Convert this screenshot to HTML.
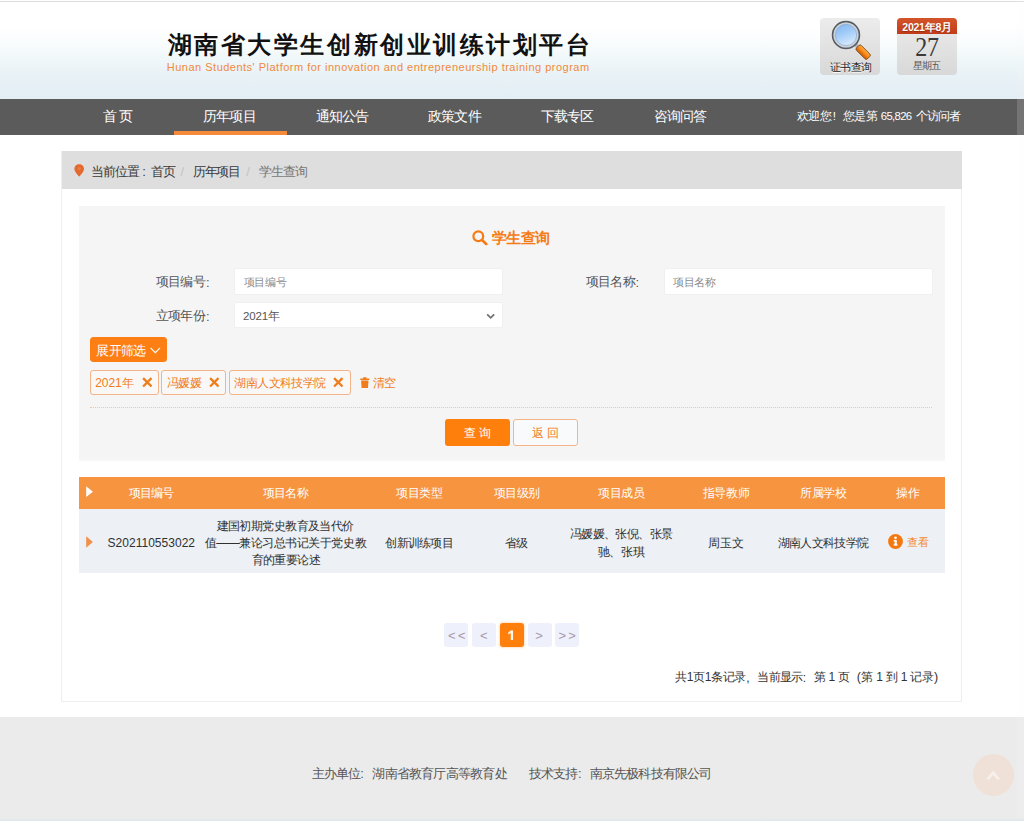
<!DOCTYPE html>
<html lang="zh">
<head>
<meta charset="utf-8">
<title>湖南省大学生创新创业训练计划平台</title>
<style>
*{box-sizing:border-box;margin:0;padding:0}
html,body{width:1024px;height:821px;overflow:hidden;background:#fff}
body{position:relative;font-family:"Liberation Sans",sans-serif;font-size:13px;color:#333}
.abs,.t{position:absolute;white-space:nowrap}
.t{font-family:"Liberation Sans",sans-serif}
#hdr{left:0;top:0;width:1024px;height:99px;background:linear-gradient(#fff 0,#fff 28%,#f9fcfd 45%,#eff7f9 60%,#e9f2f6 74%,#e5eff5 88%,#e4eef5 100%)}
#hline{left:0;top:1px;width:1024px;height:1px;background:#dcdcdc}
.ibox{top:18px;height:57px;width:60px;border-radius:4px;background:linear-gradient(#ececec,#d8d8d8)}
#nav{left:0;top:99px;width:1024px;height:36px;background:#5b5b5b}
#nav-ul{left:174px;top:131px;width:113px;height:4px;background:#f58a3a}
#box{left:61px;top:151px;width:901px;height:551px;border:1px solid #eee;background:#fff}
#bc{left:61.8px;top:151.2px;width:900px;height:38.2px;background:#dedede}
#panel{left:78.6px;top:206.3px;width:866.4px;height:254.3px;background:#f5f5f5;border-bottom:2.3px solid #f7f7f7}
.inp{height:26.5px;width:269.2px;background:#fff;border:1px solid #f0f0f0;border-radius:2px}
.tag{top:370px;height:24.6px;border:1px solid #f2b488;border-radius:3px;background:#f9f8f7}
.btn{top:418.8px;height:27.7px;width:65px;border-radius:3px}
#th{left:78.6px;top:476.6px;width:866.4px;height:32.8px;background:#f6943f}
#tr{left:78.6px;top:509.4px;width:866.4px;height:63.8px;background:#edf0f5}
.pg{top:623.4px;width:24.2px;height:23.8px;border-radius:3px;background:#eef0fc}
#ft{left:0;top:717.4px;width:1024px;height:104px;background:#ebebeb}
</style>
</head>
<body>
<div class="abs" id="hdr"></div>
<div class="abs" id="hline"></div>

<div class="abs ibox" style="left:820px"></div>
<svg class="abs" style="left:820px;top:18px" width="60" height="57" viewBox="0 0 60 57">
<defs>
<linearGradient id="lens" x1="0.3" y1="0" x2="0.7" y2="1"><stop offset="0" stop-color="#86b9f3"/><stop offset=".45" stop-color="#a6cef8"/><stop offset="1" stop-color="#dcecfc"/></linearGradient>
<linearGradient id="hand" x1="0" y1="0" x2="0" y2="1"><stop offset="0" stop-color="#ffb04a"/><stop offset=".5" stop-color="#fa8616"/><stop offset="1" stop-color="#c85a02"/></linearGradient>
</defs>
<g transform="translate(35.6,26.6) rotate(45)">
<rect x="0" y="-2" width="4" height="4" fill="#aeb3b8"/>
<rect x="3" y="-3.4" width="15.4" height="6.8" rx="1.7" fill="url(#hand)" stroke="#7d4a14" stroke-width=".9"/>
</g>
<circle cx="26" cy="17" r="13.2" fill="none" stroke="#565d65" stroke-width="2.1"/>
<circle cx="26" cy="17" r="11.7" fill="none" stroke="#ccd2d8" stroke-width="1.8"/>
<circle cx="26" cy="17" r="10.7" fill="url(#lens)" stroke="#86a7cc" stroke-width=".7"/>
</svg>
<div class="abs ibox" style="left:897px"></div>
<div class="abs" style="left:897px;top:18px;width:60px;height:16px;background:linear-gradient(#d4542a,#c23c1a);border-radius:4px 4px 0 0"></div>

<div class="abs" id="nav"></div>
<div class="abs" id="nav-ul"></div>

<div class="abs" id="box"></div>
<div class="abs" id="bc"></div>
<svg class="abs" style="left:73.7px;top:164.3px" width="10.4" height="12.6" viewBox="0 0 10 12.6"><path d="M5 0.2C2.2 0.2 0.2 2.3 0.2 4.9c0 2.7 2.3 4.4 4.1 7L5 12.5l0.7-0.6c1.8-2.6 4.1-4.3 4.1-7C9.8 2.3 7.8 0.2 5 0.2z" fill="#e4692f"/><circle cx="5" cy="4.6" r="1.6" fill="#ea7d47"/></svg>

<div class="abs" id="panel"></div>
<svg class="abs" style="left:472.2px;top:230.2px" width="15.6" height="15.4" viewBox="0 0 15.6 15.4"><circle cx="6.3" cy="6.3" r="4.9" fill="none" stroke="#f57c14" stroke-width="2.2"/><line x1="10" y1="10" x2="14.2" y2="14" stroke="#f57c14" stroke-width="2.6" stroke-linecap="round"/></svg>

<div class="abs inp" style="left:234.2px;top:268.2px"></div>
<div class="abs inp" style="left:663.5px;top:268.2px"></div>
<div class="abs inp" style="left:234.2px;top:301.6px"></div>
<svg class="abs" style="left:485.8px;top:313.3px" width="9.4" height="7" viewBox="0 0 9.4 7"><path d="M1.2 1.3L4.7 4.8L8.2 1.3" fill="none" stroke="#707070" stroke-width="1.7"/></svg>

<div class="abs" style="left:90px;top:337.3px;width:77.3px;height:25px;background:#fd7f14;border-radius:3.5px"></div>
<svg class="abs" style="left:150px;top:346.8px" width="10.6" height="7" viewBox="0 0 10.6 7"><path d="M0.6 0.8L5.3 5.6L10 0.8" fill="none" stroke="#fff" stroke-width="1.1"/></svg>

<div class="abs tag" style="left:90px;width:68.8px"></div>
<div class="abs tag" style="left:161.2px;width:64.6px"></div>
<div class="abs tag" style="left:229px;width:122px"></div>
<svg class="abs" style="left:141.6px;top:377px" width="10.6" height="10.6" viewBox="0 0 10.6 10.6"><path d="M1.1 1.1L9.5 9.5M9.5 1.1L1.1 9.5" stroke="#f07d1b" stroke-width="2.3"/></svg>
<svg class="abs" style="left:208.8px;top:377px" width="10.6" height="10.6" viewBox="0 0 10.6 10.6"><path d="M1.1 1.1L9.5 9.5M9.5 1.1L1.1 9.5" stroke="#f07d1b" stroke-width="2.3"/></svg>
<svg class="abs" style="left:333.2px;top:377px" width="10.6" height="10.6" viewBox="0 0 10.6 10.6"><path d="M1.1 1.1L9.5 9.5M9.5 1.1L1.1 9.5" stroke="#f07d1b" stroke-width="2.3"/></svg>
<svg class="abs" style="left:360.4px;top:376.8px" width="9.6" height="11.4" viewBox="0 0 9.6 11.4"><path d="M0.3 1.5h9v1.5h-9zM3.1 0.2h3.4v1.4h-3.4zM1.1 3.6h7.4l-0.5 7.6h-6.4z" fill="#f07d1b"/></svg>

<div class="abs" style="left:90px;top:406.6px;width:842px;height:0;border-top:1px dotted #f3c6a2"></div>

<div class="abs btn" style="left:445px;background:#ff7f0c"></div>
<div class="abs btn" style="left:513.2px;width:64.6px;background:#f9fafb;border:1px solid #f3b585"></div>

<div class="abs" id="th"></div>
<div class="abs" id="tr"></div>
<svg class="abs" style="left:86.3px;top:486.3px" width="7.2" height="11.4" viewBox="0 0 7.2 11.4"><path d="M0.2 0.3L6.9 5.7L0.2 11.1z" fill="#fff"/></svg>
<svg class="abs" style="left:86.3px;top:536px" width="7.2" height="12" viewBox="0 0 7.2 12"><path d="M0.2 0.3L6.9 6L0.2 11.7z" fill="#f0904a"/></svg>
<svg class="abs" style="left:888.1px;top:534px" width="15" height="15" viewBox="0 0 15 15"><circle cx="7.5" cy="7.5" r="7.4" fill="#f4780f"/><rect x="6.5" y="6.1" width="2.3" height="5.4" fill="#fff"/><rect x="5.6" y="6.1" width="2" height="1.2" fill="#fff"/><rect x="5.5" y="10.4" width="4.2" height="1.1" fill="#fff"/><circle cx="7.5" cy="3.8" r="1.35" fill="#fff"/></svg>

<div class="abs pg" style="left:444.2px"></div>
<div class="abs pg" style="left:471.8px"></div>
<div class="abs pg" style="left:499.6px;background:#ff7f0c;box-shadow:0 0 2px 1px rgba(255,170,90,.35)"></div>
<svg class="abs" style="left:507px;top:630px" width="8" height="11" viewBox="0 0 8 11"><path d="M3.8 0.5H6.05V10.1H3.8V3.1L1.3 4.4V2.5z" fill="#fff8ea"/></svg>
<div class="abs pg" style="left:527.6px"></div>
<div class="abs pg" style="left:554.8px"></div>

<div class="abs" id="ft"></div>
<div class="abs" style="left:1017px;top:0;width:7px;height:818px;background:rgba(250,250,250,.16)"></div>
<div class="abs" style="left:0;top:818px;width:1024px;height:3px;background:linear-gradient(#e9ecec,#dfe7ea)"></div>
<div class="abs" style="left:972.8px;top:754.2px;width:41px;height:42px;border-radius:50%;background:#efe1d7"></div>
<svg class="abs" style="left:985.6px;top:770.2px" width="14.4" height="11" viewBox="0 0 14.4 11"><path d="M1.6 9.4L7.2 2.6L12.8 9.4" fill="none" stroke="#f6efea" stroke-width="3"/></svg>

<span class="t" style="left:167.69px;top:27.80px;line-height:35px;font-size:23.6px;color:#111;font-weight:bold;letter-spacing:2.548px;">湖南省大学生创新创业训练计划平台</span>
<span class="t" style="left:166.84px;top:58.60px;line-height:16px;font-size:11px;color:#f08a3c;letter-spacing:0.492px;">Hunan Students' Platform for innovation and entrepreneurship training program</span>
<span class="t" style="left:829.73px;top:59.00px;line-height:16px;font-size:11px;color:#222;letter-spacing:-0.577px;text-shadow:0 1px 0 #fff">证书查询</span>
<span class="t" style="left:902.37px;top:19.20px;line-height:16px;font-size:10.5px;color:#fff;font-weight:bold;letter-spacing:-0.267px;text-shadow:0 1px 1px rgba(110,30,0,.55)">2021年8月</span>
<span class="t" style="left:915.28px;top:29.40px;line-height:36px;font-size:24px;color:#3a3a3a;font-family:'Liberation Serif',serif;letter-spacing:-0.160px;transform:scaleY(1.1);transform-origin:50% 55%">27</span>
<span class="t" style="left:912.75px;top:58.30px;line-height:15px;font-size:9.8px;color:#555;letter-spacing:-0.907px;">星期五</span>
<span class="t" style="left:102.65px;top:106.10px;line-height:21px;font-size:14px;color:#fff;letter-spacing:-0.955px;">首 页</span>
<span class="t" style="left:203.15px;top:106.10px;line-height:21px;font-size:14px;color:#fff;letter-spacing:-0.840px;">历年项目</span>
<span class="t" style="left:315.65px;top:106.10px;line-height:21px;font-size:14px;color:#fff;letter-spacing:-0.840px;">通知公告</span>
<span class="t" style="left:428.15px;top:106.10px;line-height:21px;font-size:14px;color:#fff;letter-spacing:-0.840px;">政策文件</span>
<span class="t" style="left:540.65px;top:106.10px;line-height:21px;font-size:14px;color:#fff;letter-spacing:-0.840px;">下载专区</span>
<span class="t" style="left:653.65px;top:106.10px;line-height:21px;font-size:14px;color:#fff;letter-spacing:-1.007px;">咨询问答</span>
<span class="t" style="left:797.11px;top:107.10px;line-height:17px;font-size:11.6px;color:#fff;letter-spacing:-0.644px;">欢迎您</span>
<span class="t" style="left:832.74px;top:107.30px;line-height:17px;font-size:11.6px;color:#fff;">!</span>
<span class="t" style="left:842.81px;top:107.10px;line-height:17px;font-size:11.6px;color:#fff;letter-spacing:-0.644px;">您是第</span>
<span class="t" style="left:880.83px;top:107.50px;line-height:17px;font-size:11.4px;color:#fff;letter-spacing:-0.701px;">65,826</span>
<span class="t" style="left:916.31px;top:107.10px;line-height:17px;font-size:11.6px;color:#fff;letter-spacing:-0.963px;">个访问者</span>
<span class="t" style="left:91.08px;top:162.10px;line-height:20px;font-size:13px;color:#3a3a3a;letter-spacing:-0.897px;">当前位置</span>
<span class="t" style="left:142.20px;top:162.10px;line-height:20px;font-size:13px;color:#3a3a3a;">:</span>
<span class="t" style="left:151.28px;top:162.10px;line-height:20px;font-size:13px;color:#3a3a3a;letter-spacing:-1.290px;">首页</span>
<span class="t" style="left:180.50px;top:162.10px;line-height:20px;font-size:13px;color:#c4c4c4;">/</span>
<span class="t" style="left:192.88px;top:162.10px;line-height:20px;font-size:13px;color:#3a3a3a;letter-spacing:-1.263px;">历年项目</span>
<span class="t" style="left:246.20px;top:162.10px;line-height:20px;font-size:13px;color:#c4c4c4;">/</span>
<span class="t" style="left:258.68px;top:162.10px;line-height:20px;font-size:13px;color:#777;letter-spacing:-0.863px;">学生查询</span>
<span class="t" style="left:491.62px;top:226.80px;line-height:22px;font-size:15px;color:#f57c14;font-weight:bold;letter-spacing:-0.550px;">学生查询</span>
<span class="t" style="left:155.88px;top:272.30px;line-height:20px;font-size:13px;color:#555;letter-spacing:-0.763px;">项目编号</span>
<span class="t" style="left:206.00px;top:272.90px;line-height:20px;font-size:13px;color:#555;">:</span>
<span class="t" style="left:585.88px;top:272.30px;line-height:20px;font-size:13px;color:#555;letter-spacing:-0.763px;">项目名称</span>
<span class="t" style="left:635.50px;top:272.90px;line-height:20px;font-size:13px;color:#555;">:</span>
<span class="t" style="left:155.88px;top:306.30px;line-height:20px;font-size:13px;color:#555;letter-spacing:-0.763px;">立项年份</span>
<span class="t" style="left:206.00px;top:306.90px;line-height:20px;font-size:13px;color:#555;">:</span>
<span class="t" style="left:243.52px;top:274.00px;line-height:17px;font-size:11.3px;color:#8a8a8a;letter-spacing:-0.203px;">项目编号</span>
<span class="t" style="left:673.02px;top:274.00px;line-height:17px;font-size:11.3px;color:#8a8a8a;letter-spacing:-0.503px;">项目名称</span>
<span class="t" style="left:243.11px;top:308.00px;line-height:17px;font-size:11.5px;color:#555;letter-spacing:-0.172px;">2021年</span>
<span class="t" style="left:96.27px;top:341.20px;line-height:20px;font-size:13px;color:#fff;letter-spacing:-0.763px;">展开筛选</span>
<span class="t" style="left:95.28px;top:373.60px;line-height:18px;font-size:12px;color:#f07d1b;letter-spacing:-0.111px;">2021年</span>
<span class="t" style="left:166.70px;top:373.60px;line-height:18px;font-size:12px;color:#f07d1b;letter-spacing:-0.480px;">冯媛媛</span>
<span class="t" style="left:234.40px;top:373.60px;line-height:18px;font-size:12px;color:#f07d1b;letter-spacing:-0.594px;">湖南人文科技学院</span>
<span class="t" style="left:373.20px;top:373.60px;line-height:18px;font-size:12px;color:#f07d1b;letter-spacing:-1.260px;">清空</span>
<span class="t" style="left:464.11px;top:423.90px;line-height:17px;font-size:11.6px;color:#fff;">查</span>
<span class="t" style="left:479.31px;top:423.90px;line-height:17px;font-size:11.6px;color:#fff;">询</span>
<span class="t" style="left:532.31px;top:423.90px;line-height:17px;font-size:11.6px;color:#f07d1b;">返</span>
<span class="t" style="left:547.41px;top:423.90px;line-height:17px;font-size:11.6px;color:#f07d1b;">回</span>
<span class="t" style="left:128.50px;top:484.40px;line-height:18px;font-size:12px;color:#fff;letter-spacing:-0.953px;">项目编号</span>
<span class="t" style="left:262.50px;top:484.40px;line-height:18px;font-size:12px;color:#fff;letter-spacing:-0.620px;">项目名称</span>
<span class="t" style="left:396.30px;top:484.40px;line-height:18px;font-size:12px;color:#fff;letter-spacing:-0.420px;">项目类型</span>
<span class="t" style="left:494.10px;top:484.40px;line-height:18px;font-size:12px;color:#fff;letter-spacing:-0.620px;">项目级别</span>
<span class="t" style="left:598.45px;top:484.40px;line-height:18px;font-size:12px;color:#fff;letter-spacing:-0.503px;">项目成员</span>
<span class="t" style="left:702.80px;top:484.40px;line-height:18px;font-size:12px;color:#fff;letter-spacing:-0.420px;">指导教师</span>
<span class="t" style="left:799.70px;top:484.40px;line-height:18px;font-size:12px;color:#fff;letter-spacing:-0.187px;">所属学校</span>
<span class="t" style="left:896.30px;top:484.40px;line-height:18px;font-size:12px;color:#fff;letter-spacing:-0.360px;">操作</span>
<span class="t" style="left:107.50px;top:533.50px;line-height:18px;font-size:12px;color:#303030;letter-spacing:0.025px;">S202110553022</span>
<span class="t" style="left:216.60px;top:517.00px;line-height:18px;font-size:12px;color:#303030;letter-spacing:-0.574px;">建国初期党史教育及当代价</span>
<span class="t" style="left:204.70px;top:534.00px;line-height:18px;font-size:12px;color:#303030;letter-spacing:-0.474px;">值——兼论习总书记关于党史教</span>
<span class="t" style="left:251.60px;top:551.40px;line-height:18px;font-size:12px;color:#303030;letter-spacing:-0.612px;">育的重要论述</span>
<span class="t" style="left:385.30px;top:533.60px;line-height:18px;font-size:12px;color:#303030;letter-spacing:-0.732px;">创新训练项目</span>
<span class="t" style="left:505.00px;top:533.60px;line-height:18px;font-size:12px;color:#303030;letter-spacing:-0.660px;">省级</span>
<span class="t" style="left:569.70px;top:525.00px;line-height:18px;font-size:12px;color:#303030;letter-spacing:-0.582px;">冯媛媛、张倪、张景</span>
<span class="t" style="left:597.70px;top:542.80px;line-height:18px;font-size:12px;color:#303030;letter-spacing:-0.253px;">驰、张琪</span>
<span class="t" style="left:708.10px;top:533.60px;line-height:18px;font-size:12px;color:#303030;letter-spacing:-0.080px;">周玉文</span>
<span class="t" style="left:777.50px;top:533.60px;line-height:18px;font-size:12px;color:#303030;letter-spacing:-0.601px;">湖南人文科技学院</span>
<span class="t" style="left:906.62px;top:533.50px;line-height:17px;font-size:11.2px;color:#f28a30;letter-spacing:-0.016px;">查看</span>
<span class="t" style="left:447.96px;top:626.30px;line-height:20px;font-size:13px;color:#a698aa;letter-spacing:2.392px;">&lt;&lt;</span>
<span class="t" style="left:479.96px;top:626.30px;line-height:20px;font-size:13px;color:#a698aa;">&lt;</span>
<span class="t" style="left:535.26px;top:626.30px;line-height:20px;font-size:13px;color:#a698aa;">&gt;</span>
<span class="t" style="left:558.56px;top:626.30px;line-height:20px;font-size:13px;color:#a698aa;letter-spacing:2.092px;">&gt;&gt;</span>
<span class="t" style="left:675.20px;top:668.30px;line-height:18px;font-size:12px;color:#333;letter-spacing:-0.353px;">共1页1条记录</span>
<span class="t" style="left:746.24px;top:669.00px;line-height:18px;font-size:12px;color:#333;">,</span>
<span class="t" style="left:757.20px;top:668.30px;line-height:18px;font-size:12px;color:#333;letter-spacing:-0.653px;">当前显示</span>
<span class="t" style="left:802.80px;top:668.80px;line-height:18px;font-size:12px;color:#333;">:</span>
<span class="t" style="left:814.10px;top:668.30px;line-height:18px;font-size:12px;color:#333;letter-spacing:-0.426px;">第 1 页</span>
<span class="t" style="left:856.65px;top:668.10px;line-height:19px;font-size:12.5px;color:#333;">(</span>
<span class="t" style="left:861.20px;top:668.30px;line-height:18px;font-size:12px;color:#333;letter-spacing:-0.183px;">第 1 到 1 记录</span>
<span class="t" style="left:933.95px;top:668.10px;line-height:19px;font-size:12.5px;color:#333;">)</span>
<span class="t" style="left:311.88px;top:763.70px;line-height:20px;font-size:13px;color:#555;letter-spacing:-0.997px;">主办单位</span>
<span class="t" style="left:360.30px;top:764.20px;line-height:20px;font-size:13px;color:#555;">:</span>
<span class="t" style="left:372.38px;top:763.70px;line-height:20px;font-size:13px;color:#555;letter-spacing:-0.779px;">湖南省教育厅高等教育处</span>
<span class="t" style="left:528.88px;top:763.70px;line-height:20px;font-size:13px;color:#555;letter-spacing:-1.030px;">技术支持</span>
<span class="t" style="left:577.90px;top:764.20px;line-height:20px;font-size:13px;color:#555;">:</span>
<span class="t" style="left:589.77px;top:763.70px;line-height:20px;font-size:13px;color:#555;letter-spacing:-0.821px;">南京先极科技有限公司</span>
</body>
</html>
